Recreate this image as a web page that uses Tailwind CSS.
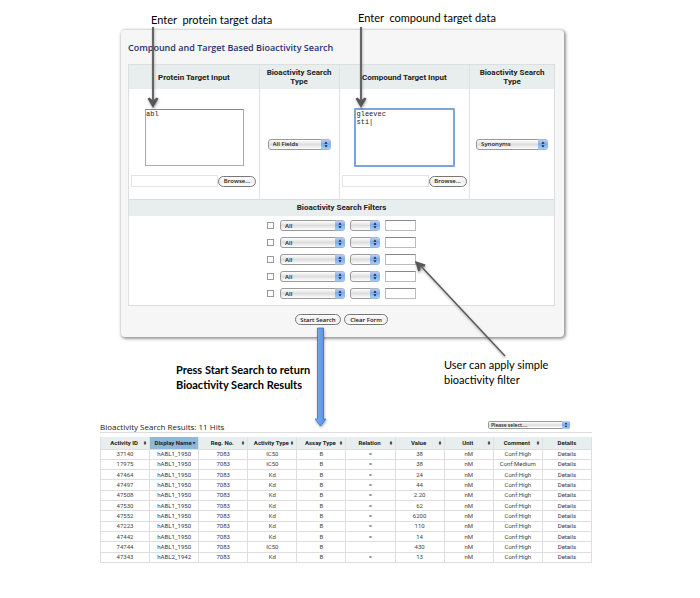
<!DOCTYPE html>
<html lang="en">
<head>
<meta charset="utf-8">
<title>Compound and Target Based Bioactivity Search</title>
<script src="https://cdn.jsdelivr.net/npm/@tailwindcss/browser@4"></script>
</head>
<body class="bg-white text-black">
<svg width="0" height="0" class="absolute" aria-hidden="true">
  <defs>
    <linearGradient id="capFill" x1="0" y1="0" x2="0" y2="1">
      <stop offset="0" stop-color="#c3d0f0"/><stop offset=".45" stop-color="#7fadea"/><stop offset="1" stop-color="#a4d0fc"/>
    </linearGradient>
    <symbol id="cap" viewBox="0 0 10 10">
      <path d="M0 0H7Q10 0 10 3V7Q10 10 7 10H0Z" fill="url(#capFill)"/>
      <path d="M5 2L6.600 4.200H3.400ZM5 8L6.600 5.800H3.400Z" fill="#14284f"/>
    </symbol>
    <symbol id="sort" viewBox="0 0 4 6"><path d="M2 .9L3.400 2.700H.6ZM2 5.100L3.400 3.300H.6Z" fill="#222"/></symbol>
    <symbol id="down" viewBox="0 0 4 6"><path d="M.5 2.200H3.500L2 4.200Z" fill="#111"/></symbol>
  </defs>
</svg>
<main class="relative min-h-[598px] pt-[10px]">
  <div class="flex h-5 pl-[151px] font-['Lato',sans-serif] text-[11px] leading-5 whitespace-pre">
    <p class="w-[207px]">Enter  protein target data</p>
    <p class="leading-4">Enter  compound target data</p>
  </div>

  <form class="ml-[121px] mr-[136px] rounded-[4px] bg-[#f6f6f6] pt-[10px] pr-[9px] pb-[12px] pl-[7px] shadow-[1px_1px_3px_1px_#999]" onsubmit="return false">
    <h1 class="h-6 font-['Open_Sans',sans-serif] text-[9px] leading-4 font-semibold text-[#25336e] whitespace-nowrap">Compound and Target Based Bioactivity Search</h1>
    <div class="border border-[#dcdfdf] bg-white font-['Roboto',sans-serif]">
      <div class="grid grid-cols-[131fr_80fr_131fr_84fr] text-center text-[8px] leading-[9px] font-bold text-[#222]">
        <h2 class="flex h-6 items-center justify-center border-r border-[#dde3e2] bg-[#e8eeed]"><label for="protein">Protein Target Input</label></h2>
        <h2 class="flex items-center justify-center border-r border-[#dde3e2] bg-[#e8eeed]"><label for="ptype">Bioactivity Search<br>Type</label></h2>
        <h2 class="flex items-center justify-center border-r border-[#dde3e2] bg-[#e8eeed]"><label for="compound">Compound Target Input</label></h2>
        <h2 class="flex items-center justify-center bg-[#e8eeed]"><label for="ctype">Bioactivity Search<br>Type</label></h2>
      </div>
      <div class="grid h-[110px] grid-cols-[131fr_80fr_131fr_84fr]">
        <div class="flex flex-col gap-[9px] border-r border-[#e2e2e2] pt-5 pl-[2px]">
          <textarea id="protein" class="ml-[14px] h-[57px] w-[99px] resize-none border border-t-[#888] border-[#aaa] bg-white px-0 font-['Liberation_Mono',monospace] text-[7px] leading-[8px] text-[#222] outline-none">abl</textarea>
          <div class="flex items-center">
            <input type="text" aria-label="Protein file" class="h-3 w-[87px] border border-[#e3e3e3] bg-white px-px text-[7px]">
            <button type="button" class="h-[11px] w-[38px] rounded-full border border-[#777] bg-linear-to-b from-white via-[#eee] to-white text-center font-['Open_Sans',sans-serif] text-[6px] leading-[8px] font-semibold text-[#222]">Browse...</button>
          </div>
        </div>
        <div class="flex items-center justify-center border-r border-[#e2e2e2]">
          <span class="relative h-[11px] w-[63px]"><select id="ptype" class="block h-full w-full appearance-none rounded-[3px] border border-[#999] bg-linear-to-b from-white via-[#ddd] to-white pl-1 font-['Open_Sans',sans-serif] text-[6px] leading-[8px] font-semibold text-[#222]"><option>All Fields</option></select><svg class="pointer-events-none absolute top-0 right-0 h-[11px] w-[10px]"><use href="#cap" width="10" height="11"/></svg></span>
        </div>
        <div class="flex flex-col gap-2 border-r border-[#e2e2e2] pt-[19px] pl-[2px]">
          <textarea id="compound" class="ml-3 h-[59px] w-[101px] resize-none rounded-[1px] border-2 border-[#7da4dc] bg-white px-px font-['Liberation_Mono',monospace] text-[7px] leading-[8px] text-[#222] outline-none">gleevec
sti|</textarea>
          <div class="flex items-center">
            <input type="text" aria-label="Compound file" class="h-3 w-[87px] border border-[#e3e3e3] bg-white px-px text-[7px]">
            <button type="button" class="h-[11px] w-[38px] rounded-full border border-[#777] bg-linear-to-b from-white via-[#eee] to-white text-center font-['Open_Sans',sans-serif] text-[6px] leading-[8px] font-semibold text-[#222]">Browse...</button>
          </div>
        </div>
        <div class="flex items-center justify-center">
          <span class="relative h-[11px] w-[72px]"><select id="ctype" class="block h-full w-full appearance-none rounded-[3px] border border-[#999] bg-linear-to-b from-white via-[#ddd] to-white pl-1 font-['Open_Sans',sans-serif] text-[6px] leading-[8px] font-semibold text-[#222]"><option>Synonyms</option></select><svg class="pointer-events-none absolute top-0 right-0 h-[11px] w-[10px]"><use href="#cap" width="10" height="11"/></svg></span>
        </div>
      </div>
      <h2 class="h-[17px] border-t border-[#d8dcdc] bg-[#e8eeed] text-center text-[8px] leading-4 font-bold text-[#222]">Bioactivity Search Filters</h2>
      <div id="filters" class="flex flex-col items-center gap-[6px] pt-1 pb-[6px]">
        <template>
          <div class="flex h-[11px] items-center">
            <input type="checkbox" aria-label="Use filter" class="mr-[6px] h-[7px] w-[7px] appearance-none border border-[#999] bg-white">
            <span class="relative mr-[5px] h-[11px] w-[65px]"><select aria-label="Activity" class="block h-full w-full appearance-none rounded-[3px] border border-[#999] bg-linear-to-b from-white via-[#ddd] to-white pl-1 font-['Open_Sans',sans-serif] text-[6px] leading-[8px] font-semibold text-[#222]"><option>All</option></select><svg class="pointer-events-none absolute top-0 right-0 h-[11px] w-[10px]"><use href="#cap" width="10" height="11"/></svg></span>
            <span class="relative mr-[5px] h-[11px] w-[30px]"><select aria-label="Operator" class="block h-full w-full appearance-none rounded-[3px] border border-[#999] bg-linear-to-b from-white via-[#ddd] to-white text-[6px]"><option></option></select><svg class="pointer-events-none absolute top-0 right-0 h-[11px] w-[10px]"><use href="#cap" width="10" height="11"/></svg></span>
            <input type="text" aria-label="Filter value" class="h-[11px] w-[31px] border border-[#bbb] border-t-[#888] bg-white px-px text-[7px]">
          </div>
        </template>
      </div>
    </div>
    <div class="mt-2 flex justify-center gap-[3px] font-['Open_Sans',sans-serif] text-[6px] leading-[8px] font-semibold text-[#222]">
      <button type="submit" class="h-[11px] w-[46px] rounded-full border border-[#777] bg-linear-to-b from-white via-[#eee] to-white">Start Search</button>
      <button type="reset" class="h-[11px] w-[44px] rounded-full border border-[#777] bg-linear-to-b from-white via-[#eee] to-white">Clear Form</button>
    </div>
  </form>

  <div class="flex h-[84px] pt-[20px] pl-[176px] font-['Lato',sans-serif] text-[11px] leading-[15px]">
    <p class="w-[268px] pt-[5px] font-bold">Press Start Search to return<br>Bioactivity Search Results</p>
    <p>User can apply simple<br>bioactivity filter</p>
  </div>

  <section class="mr-[108px] ml-[100px]">
    <div class="mb-1 flex h-3 items-start justify-between border-b border-[#ddd]">
      <h2 class="font-['Open_Sans',sans-serif] text-[8px] leading-[11px] text-[#222]">Bioactivity Search Results: 11 Hits</h2>
      <span class="relative mr-[22px] h-2 w-[82px]"><select aria-label="Export" class="block h-full w-full appearance-none rounded-[2px] border border-[#999] bg-linear-to-b from-white via-[#ddd] to-white pl-[2px] font-['Open_Sans',sans-serif] text-[5px] leading-[6px] font-semibold text-[#222]"><option>Please select....</option></select><svg class="pointer-events-none absolute top-0 right-0 h-2 w-[8px]"><use href="#cap" width="8" height="8"/></svg></span>
    </div>
    <table class="h-[126px] w-full table-fixed border-collapse text-center font-['Roboto',sans-serif] text-[6px] leading-[8px] text-[#444]">
      <thead><tr id="head" class="h-3 bg-[#e8eeed] text-[#222]"></tr></thead>
      <tbody id="rows"></tbody>
    </table>
  </section>

  <svg class="pointer-events-none absolute top-0 left-0" width="700" height="598" viewBox="0 0 700 598" aria-hidden="true">
    <defs>
      <filter id="sh" filterUnits="userSpaceOnUse" x="0" y="0" width="700" height="598"><feDropShadow dx="0.5" dy="1.5" stdDeviation="1" flood-color="#000" flood-opacity=".35"/></filter>
      <linearGradient id="blue" x1="0" x2="1"><stop offset="0" stop-color="#7fb0f0"/><stop offset="1" stop-color="#4f8de0"/></linearGradient>
    </defs>
    <g filter="url(#sh)" fill="none" stroke="#595959" stroke-width="1.8">
      <path d="M153 27V105M361 27V105"/>
      <path d="M505 356L418 263" stroke-width="1.5"/>
      <g fill="#595959" stroke="none">
        <path id="tip" d="M153 108L147.500 98.500L149.500 97.500L153 100.500L156.500 97.500L158.500 98.500Z"/>
        <use href="#tip" x="208"/>
        <path d="M415 261L425.500 264.500L424.600 266.800L420.500 266.500L420.500 270.500L418.200 271.500Z"/>
      </g>
    </g>
    <path filter="url(#sh)" d="M317.500 328H323.500V419H326L320.500 426L315 419H317.500Z" fill="url(#blue)" stroke="#3d74bd" stroke-width=".8"/>
  </svg>
</main>
<script>
  const filters = document.getElementById('filters');
  const tpl = filters.querySelector('template');
  for (let i = 0; i < 5; i++) filters.appendChild(tpl.content.cloneNode(true));

  const heads = ['Activity ID', 'Display Name', 'Reg. No.', 'Activity Type', 'Assay Type', 'Relation', 'Value', 'Unit', 'Comment', 'Details'];
  document.getElementById('head').innerHTML = heads.map((h, i) => {
    const active = i === 1, last = i === 9;
    const icon = last ? '' : `<svg class="h-[6px] w-[4px] shrink-0"><use href="#${active ? 'down' : 'sort'}" width="4" height="6"/></svg>`;
    return `<th class="border-x border-[#dde3e2] p-0 ${active ? 'bg-[#8fb8d6]' : ''}"><div class="flex items-center justify-center whitespace-nowrap ${last ? '' : 'pr-[2px] pl-1'}"><span class="flex-1">${h}</span>${icon}</div></th>`;
  }).join('');

  const data = [
    ['37140', 'hABL1_1950', 'IC50', '=', '38', 'High'], ['17975', 'hABL1_1950', 'IC50', '=', '38', 'Medium'],
    ['47464', 'hABL1_1950', 'Kd', '=', '24', 'High'], ['47497', 'hABL1_1950', 'Kd', '=', '44', 'High'],
    ['47508', 'hABL1_1950', 'Kd', '=', '2.20', 'High'], ['47530', 'hABL1_1950', 'Kd', '=', '62', 'High'],
    ['47552', 'hABL1_1950', 'Kd', '=', '6200', 'High'], ['47223', 'hABL1_1950', 'Kd', '=', '110', 'High'],
    ['47442', 'hABL1_1950', 'Kd', '=', '14', 'High'], ['74744', 'hABL1_1950', 'IC50', '', '430', 'High'],
    ['47343', 'hABL2_1942', 'Kd', '=', '13', 'High']
  ];
  const link = t => `<a href="#" class="text-[#2b3566]">${t}</a>`;
  document.getElementById('rows').innerHTML = data.map(([id, name, type, rel, val, conf]) =>
    '<tr>' + [id, link(name), link('7083'), type, 'B', rel, val, 'nM', 'Conf:' + conf, link('Details')]
      .map(c => `<td class="border border-[#dedede] p-0">${c}</td>`).join('') + '</tr>').join('');
</script>
</body>
</html>
